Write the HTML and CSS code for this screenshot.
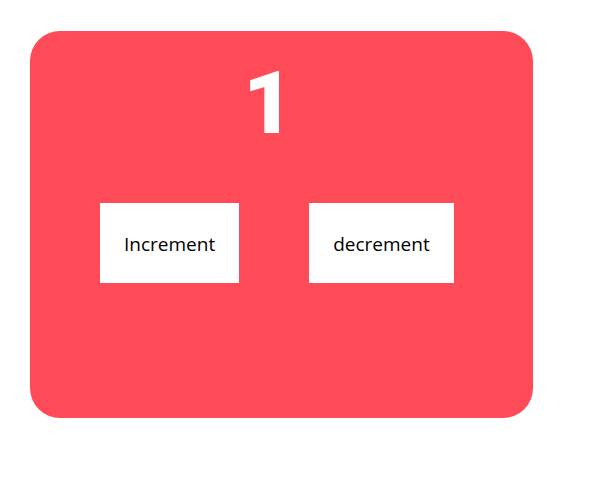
FILE: index.html
```html
<!DOCTYPE html>
<html lang="en">
<head>
<meta charset="utf-8">
<title>Counter</title>
<link rel="stylesheet" href="styles.css">
</head>
<body>
<main class="counter">
<h1 class="value">1</h1>
<div class="actions">
<button class="action" type="button">Increment</button>
<button class="action" type="button">decrement</button>
</div>
</main>
</body>
</html>
```
FILE: styles.css
```css
* {
  box-sizing: border-box;
}

body {
  margin: 0;
  padding: 31px 62px 60px 30px;
  min-height: 100vh;
  display: flex;
  background: #fff;
  font-family: "Open Sans", "Noto Sans", sans-serif;
}

.counter {
  flex: 1;
  padding: 17px 70px;
  border-radius: 30px;
  background: #ff4a57;
}

.value {
  margin: 0 26px 45px 0;
  color: #fff;
  font-family: Roboto, sans-serif;
  font-size: 88px;
  line-height: 110px;
  font-weight: 900;
  text-align: center;
}

.actions {
  display: flex;
  gap: 70px;
}

.action {
  height: 80px;
  padding: 2px 24px 0;
  border: 0;
  background: #fff;
  color: #000;
  font-family: inherit;
  font-size: 19px;
}
```
